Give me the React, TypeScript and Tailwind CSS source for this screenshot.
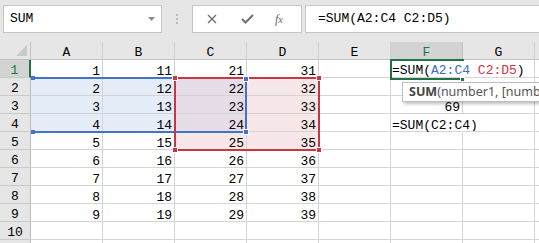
import React from 'react';

const mono = { fontFamily: '"Liberation Mono", "DejaVu Sans Mono", monospace' };

// last column is only a sliver at the right edge, so its letter is left out
const COLS = ['A', 'B', 'C', 'D', 'E', 'F', 'G', ''];
const ROWS = [1, 2, 3, 4, 5, 6, 7, 8, 9, 10, 11];

function cellValue(r: number, c: number): string {
  if (r <= 9 && c <= 3) return String(r + c * 10);
  if (c === 5 && r === 3) return '69';
  if (c === 5 && r === 4) return '=SUM(C2:C4)';
  return '';
}

function cellFill(r: number, c: number): string {
  const inBlue = r >= 2 && r <= 4 && c >= 0 && c <= 2;
  const inRed = r >= 2 && r <= 5 && c >= 2 && c <= 3;
  if (inBlue && inRed) return 'bg-[#e7dde8]';
  if (inBlue) return 'bg-[#e5edf8]';
  if (inRed) return 'bg-[#f8e7e9]';
  return 'bg-transparent';
}

function Toolbar() {
  return (
    <div className="flex h-[42px] overflow-hidden bg-[#e6e6e6] pt-[5px] pl-[3px]">
      <div className="flex h-[28px] w-[159px] shrink-0 items-center justify-between border border-[#c6c6c6] bg-white pl-[6px] pr-[6px] text-[13px] text-black" style={mono}>
        SUM
        <svg width="7" height="4" viewBox="0 0 7 4">
          <path d="M0 0 L7 0 L3.5 4 Z" fill="#8a8a8a" />
        </svg>
      </div>
      <div className="ml-[14px] flex w-[2px] shrink-0 flex-col gap-[2px] pt-[9px]">
        <div className="h-[2px] w-[2px] bg-[#b9b9b9]" />
        <div className="h-[2px] w-[2px] bg-[#b9b9b9]" />
        <div className="h-[2px] w-[2px] bg-[#b9b9b9]" />
      </div>
      <div className="ml-[14px] flex h-[28px] w-[110px] shrink-0 items-center border border-[#c6c6c6] bg-white">
        <svg className="ml-[14px]" width="10" height="10" viewBox="0 0 10 10">
          <path d="M1 1 L9 9 M9 1 L1 9" stroke="#707070" strokeWidth="1.4" />
        </svg>
        <svg className="ml-[24px]" width="13" height="10" viewBox="0 0 13 10">
          <path d="M1 5 L4.5 8.5 L12 1" stroke="#707070" strokeWidth="2" fill="none" />
        </svg>
        <span className="ml-[21px] text-[12px] italic text-[#666]" style={{ fontFamily: '"Liberation Serif", serif' }}>
          f<span className="text-[10px]">x</span>
        </span>
      </div>
      <div className="ml-[3px] flex h-[28px] w-[300px] shrink-0 items-center border border-[#c6c6c6] bg-white pl-[12px] text-[13px] text-black" style={mono}>
        =SUM(A2:C4 C2:D5)
      </div>
    </div>
  );
}

function Sheet() {
  return (
    <div className="relative h-[201px] overflow-hidden bg-white">
      <div className="grid grid-cols-[31px_repeat(8,72px)] text-[13px] text-black" style={mono}>
        <div className="relative h-[18px] border-r border-b border-[#c2c2c2] bg-[#e6e6e6]">
          <svg className="absolute right-[3px] bottom-[3px]" width="11" height="11" viewBox="0 0 11 11">
            <path d="M11 0 L11 11 L0 11 Z" fill="#c9c9c9" />
          </svg>
        </div>
        {COLS.map((c, i) => (
          <div
            key={i}
            className={`h-[18px] border-r border-b text-center leading-[18px] pt-[2px] ${
              c === 'F' ? 'border-[#c2c2c2] border-b-[#217346] bg-[#d3d3d3] text-[#217346]' : 'border-[#d0d0d0] border-b-[#c2c2c2] bg-[#e6e6e6]'
            }`}
          >
            {c}
          </div>
        ))}
        {ROWS.map((r) => (
          <React.Fragment key={r}>
            <div
              className={`h-[18px] border-b text-center leading-[18px] pt-[2px] ${
                r === 1
                  ? 'border-r-2 border-b-[#c9c9c9] border-r-[#217346] bg-[#d3d3d3] text-[#217346]'
                  : 'border-r border-[#c9c9c9] border-r-[#bdbdbd] bg-[#e6e6e6]'
              }`}
            >
              {r <= 10 ? r : ''}
            </div>
            {COLS.map((_, c) => {
              const overflow = c === 5 && (r === 1 || r === 4);
              return (
                <div
                  key={c}
                  className={`h-[18px] whitespace-nowrap border-r border-b border-[#d4d4d4] leading-[18px] pt-[3px] ${cellFill(r, c)} ${
                    overflow ? 'border-r-white text-left pl-[1px]' : 'text-right pr-[2px]'
                  }`}
                >
                  {cellValue(r, c)}
                </div>
              );
            })}
          </React.Fragment>
        ))}
      </div>

      {/* blue reference range A2:C4 */}
      <div className="absolute left-[31px] top-[35px] h-[2px] w-[217px] bg-[#4472c4]" />
      <div className="absolute left-[31px] top-[89px] h-[2px] w-[217px] bg-[#4472c4]" />
      <div className="absolute left-[245px] top-[35px] h-[56px] w-[2px] bg-[#4472c4]" />
      {/* red reference range C2:D5 */}
      <div className="absolute left-[174px] top-[35px] h-[2px] w-[146px] bg-[#c8363f]" />
      <div className="absolute left-[174px] top-[107px] h-[2px] w-[146px] bg-[#c8363f]" />
      <div className="absolute left-[174px] top-[35px] h-[74px] w-[2px] bg-[#c8363f]" />
      <div className="absolute left-[318px] top-[35px] h-[74px] w-[2px] bg-[#c8363f]" />
      {/* corner handles */}
      <div className="absolute left-[31px] top-[34px] h-[4px] w-[4px] bg-[#4472c4]" />
      <div className="absolute left-[31px] top-[88px] h-[4px] w-[4px] bg-[#4472c4]" />
      <div className="absolute left-[243px] top-[34px] h-[6px] w-[6px] border border-white bg-[#4472c4]" />
      <div className="absolute left-[243px] top-[87px] h-[6px] w-[6px] border border-white bg-[#4472c4]" />
      <div className="absolute left-[172px] top-[33px] h-[6px] w-[6px] border border-white bg-[#c8363f]" />
      <div className="absolute left-[316px] top-[33px] h-[6px] w-[6px] border border-white bg-[#c8363f]" />
      <div className="absolute left-[172px] top-[105px] h-[6px] w-[6px] border border-white bg-[#c8363f]" />
      <div className="absolute left-[316px] top-[105px] h-[6px] w-[6px] border border-white bg-[#c8363f]" />

      {/* active cell F1 in edit mode */}
      <div className="absolute left-[390px] top-[17px] h-[21px] w-[74px] border-2 border-r-0 border-[#217346]" />
      <div className="absolute left-[460px] top-[35px] h-[5px] w-[5px] border border-white bg-[#217346]" />
      <div className="absolute left-[392px] top-[19px] h-[17px] whitespace-nowrap leading-[18px] pt-[1px] text-[13px] text-black" style={mono}>
        =SUM(<span className="text-[#3d6cc0]">A2:C4</span> <span className="text-[#c8363f]">C2:D5</span>)
      </div>

      {/* function tooltip */}
      <div
        className="absolute left-[402px] top-[40px] flex h-[20px] w-[170px] items-center whitespace-nowrap border border-[#bcbcbc] bg-white pl-[6px] text-[12.5px] text-[#555] shadow-[2px_2px_3px_rgba(0,0,0,0.25)]"
        style={{ fontFamily: '"Noto Sans", sans-serif' }}
      >
        <span className="font-bold text-[#444]">SUM</span>(number1, [number2], ...)
      </div>
    </div>
  );
}

export default function App() {
  return (
    <div className="h-[243px] w-[539px] overflow-hidden bg-white">
      <Toolbar />
      <Sheet />
    </div>
  );
}
